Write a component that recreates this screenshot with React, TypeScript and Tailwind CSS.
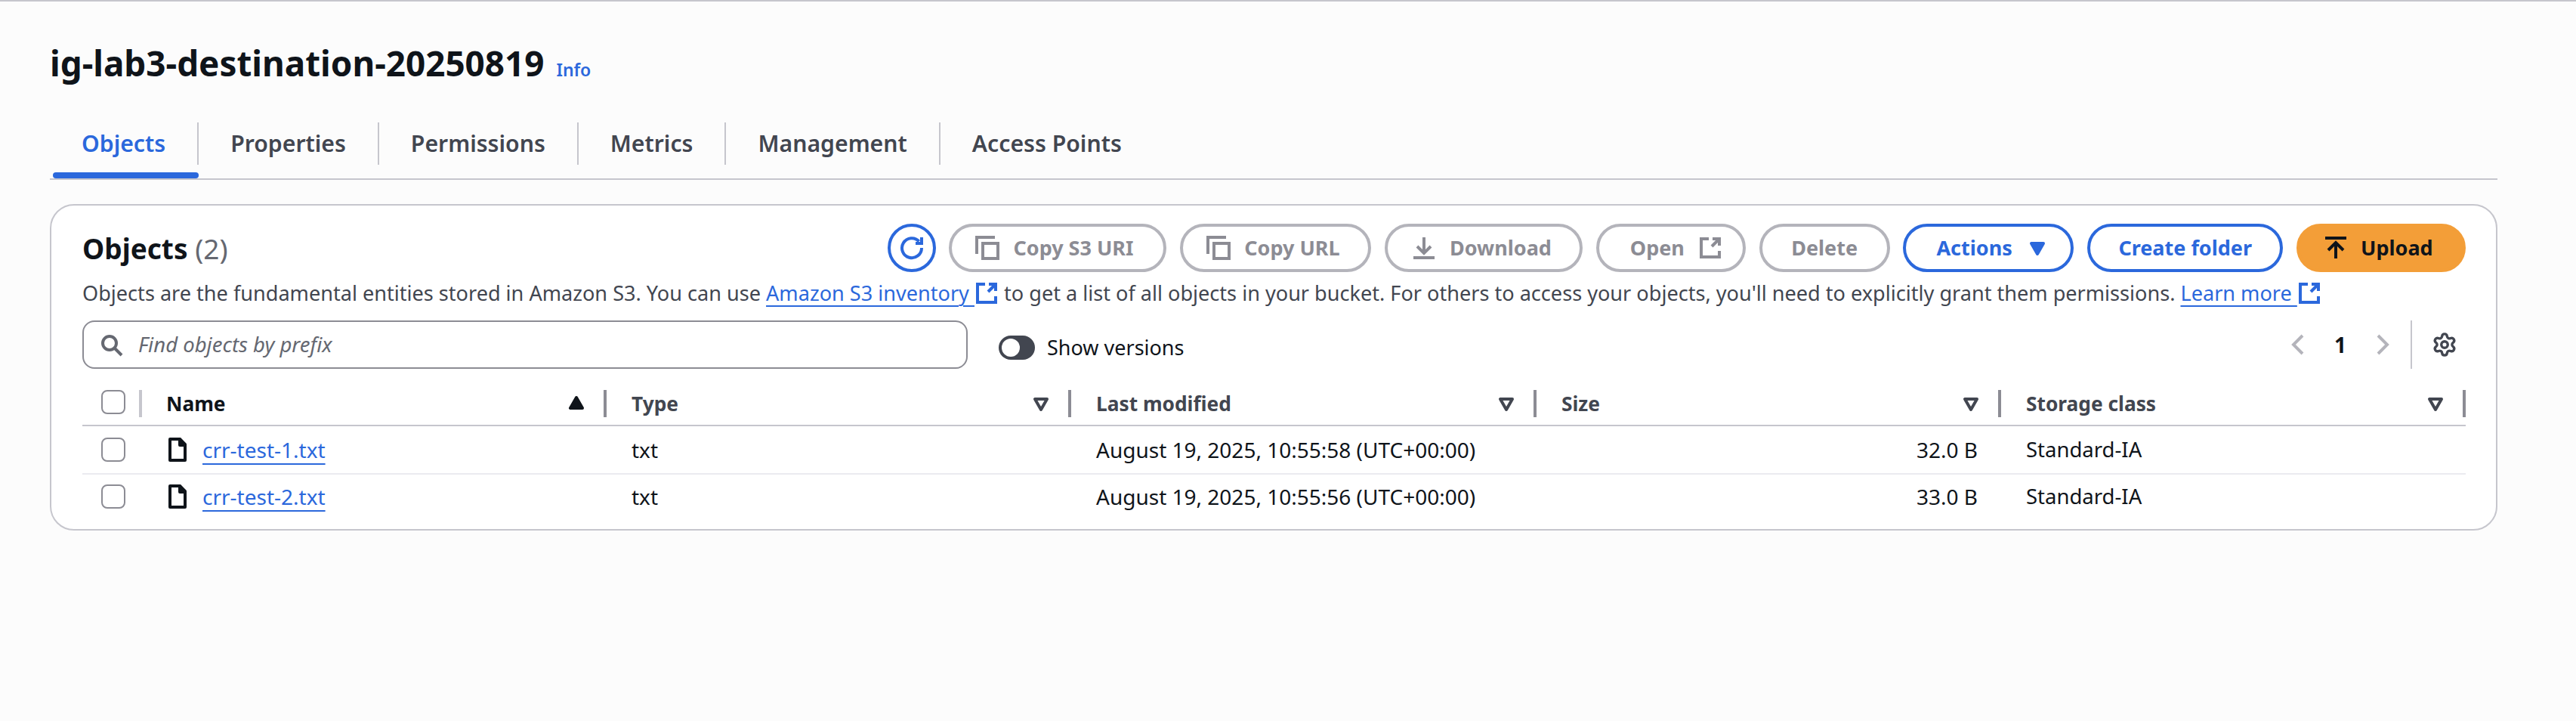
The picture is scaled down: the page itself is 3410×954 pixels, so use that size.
import React from 'react';
import { Settings } from 'lucide-react';

const font = { fontFamily: '"Noto Sans", sans-serif' };

function Ico({ children, className = '' }: { children: React.ReactNode; className?: string }) {
  return (
    <svg viewBox="0 0 16 16" fill="none" stroke="currentColor" strokeWidth="2" className={`w-8 h-8 shrink-0 ${className}`}>
      {children}
    </svg>
  );
}

function ExternalIcon({ className = '' }: { className?: string }) {
  return (
    <Ico className={className}>
      <path d="M7 2H2v12h12v-4" />
      <path d="M14 2 9 7" />
      <path d="M9.500 2H14v4.500" />
    </Ico>
  );
}

function CopyIcon() {
  return (
    <Ico>
      <path d="M1 12V1h12" />
      <path d="M5 5h10v10H5z" />
    </Ico>
  );
}

function Button({ children, disabled, primary, className = '' }: { children: React.ReactNode; disabled?: boolean; primary?: boolean; className?: string }) {
  const look = primary
    ? 'bg-[#f39e38] text-[#0f141a] border-[#f39e38]'
    : disabled
      ? 'border-[#b4b4bb] text-[#8c8c94] bg-white'
      : 'border-[#2b68dc] text-[#2b68dc] bg-white';
  return (
    <div className={`h-16 border-4 rounded-full flex items-center text-[27px] font-bold shrink-0 ${look} ${className}`}>
      {children}
    </div>
  );
}

function Checkbox() {
  return <div className="w-8 h-8 rounded-[8px] border-2 border-[#8c8c94] bg-white shrink-0" />;
}

function SortDown() {
  return (
    <svg viewBox="0 0 16 16" className="w-8 h-8 text-[#424650]" fill="none" stroke="currentColor" strokeWidth="2" strokeLinejoin="round">
      <path d="M4 5h8l-4 7z" />
    </svg>
  );
}

function Header({ label, sort, dark, className = 'pl-[33px]' }: { label: string; sort: React.ReactNode; dark?: boolean; className?: string }) {
  return (
    <div className={`flex items-center h-9 border-r-4 border-[#8c8c94] pr-[20px] justify-between ${className}`}>
      <span className={`text-[26.300px] font-bold leading-none ${dark ? 'text-[#0f141a]' : 'text-[#424650]'}`}>{label}</span>
      {sort}
    </div>
  );
}

const rows = [
  { name: 'crr-test-1.txt', modified: 'August 19, 2025, 10:55:58 (UTC+00:00)', size: '32.0 B' },
  { name: 'crr-test-2.txt', modified: 'August 19, 2025, 10:55:56 (UTC+00:00)', size: '33.0 B' },
];

const tabs = ['Objects', 'Properties', 'Permissions', 'Metrics', 'Management', 'Access Points'];

const cols = 'grid grid-cols-[79px_615px_615px_616px_615px_615px]';

export default function App() {
  return (
    <div style={font} className="w-[3410px] h-[954px] bg-[#fcfcfc] border-t-2 border-[#c6c6cd] text-[#0f141a] overflow-hidden">
      <div className="pl-[66px] w-[3306px]">
        <div className="flex items-baseline pt-[53px] h-[160px]">
          <h1 className="text-[45.800px] leading-[56px] font-bold">ig-lab3-destination-20250819</h1>
          <span className="ml-4 text-[23px] font-semibold text-[#2b68dc]">Info</span>
        </div>
        <div className="flex border-b-2 border-[#c6c6cd] h-[76px]">
          {tabs.map((t, i) => (
            <div key={t} className="relative h-[74px]">
              <div
                className={`h-14 flex items-center px-[42px] text-[30.200px] font-semibold ${i < tabs.length - 1 ? 'border-r-2 border-[#c6c6cd]' : ''} ${i === 0 ? 'text-[#2b68dc]' : 'text-[#424650]'}`}
              >
                {t}
              </div>
              {i === 0 && <div className="absolute left-1 right-0 bottom-0 h-2 rounded-[4px] bg-[#2b68dc]" />}
            </div>
          ))}
        </div>

        <div className="mt-8 h-[432px] border-2 border-[#c6c6cd] rounded-[32px] bg-white px-[41px] pt-6">
          <div className="flex items-center justify-between h-16 -mr-px">
            <h2 className="text-[37px] font-bold leading-none">
              Objects <span className="font-normal text-[#656871]">(2)</span>
            </h2>
            <div className="flex items-center gap-[17.800px]">
              <div className="w-16 h-16 rounded-full border-4 border-[#2b68dc] text-[#2b68dc] flex items-center justify-center">
                <Ico>
                  <path d="M12.800 3.700A6.500 6.500 0 1 0 14.500 8" />
                  <path d="M14.500 1v4h-4" />
                </Ico>
              </div>
              <Button disabled className="w-[288px] pl-[31px] gap-[18px]"><CopyIcon />Copy S3 URI</Button>
              <Button disabled className="w-[253px] pl-[31px] gap-[18px]"><CopyIcon />Copy URL</Button>
              <Button disabled className="w-[262px] pl-[32px] gap-[18px]">
                <Ico>
                  <path d="M8 1v10" />
                  <path d="m3.500 7 4.500 4.500L12.500 7" />
                  <path d="M1 14.500h14" />
                </Ico>
                Download
              </Button>
              <Button disabled className="w-[198px] pl-[41px] gap-[18px]">Open<ExternalIcon /></Button>
              <Button disabled className="w-[173px] justify-center">Delete</Button>
              <Button className="w-[226px] pl-[40px] gap-[17px]">
                Actions
                <svg viewBox="0 0 16 16" className="w-8 h-8" fill="currentColor" stroke="currentColor" strokeWidth="2" strokeLinejoin="round">
                  <path d="M4 5h8l-4 7z" />
                </svg>
              </Button>
              <Button className="w-[259px] justify-center">Create folder</Button>
              <Button primary className="w-[224px] pl-[32px] gap-[17px]">
                <Ico>
                  <path d="M1 1.500h14" />
                  <path d="M8 15V5" />
                  <path d="M3 9.500 8 4.500l5 5" />
                </Ico>
                Upload
              </Button>
            </div>
          </div>

          <p className="text-[27.100px] leading-10 mt-[8px] h-10 whitespace-nowrap text-[#424650] flex items-center">
            <span>Objects are the fundamental entities stored in Amazon S3. You can use&nbsp;</span>
            <a className="text-[#2b68dc] underline underline-offset-[6px] decoration-2">Amazon S3 inventory&nbsp;</a>
            <ExternalIcon className="text-[#2b68dc]" />
            <span>&nbsp;to get a list of all objects in your bucket. For others to access your objects, you'll need to explicitly grant them permissions.&nbsp;</span>
            <a className="text-[#2b68dc] underline underline-offset-[6px] decoration-2">Learn more&nbsp;</a>
            <ExternalIcon className="text-[#2b68dc]" />
          </p>

          <div className="flex items-center h-16 mt-4">
            <div className="w-[1172px] h-16 border-2 border-[#8c8c94] rounded-[16px] flex items-center pl-[21px] gap-[19px]">
              <Ico className="text-[#656871]">
                <circle cx="6.500" cy="7" r="4.500" />
                <path d="m10 10.500 4.500 4.500" />
              </Ico>
              <span className="text-[27.500px] italic text-[#656871]">Find objects by prefix</span>
            </div>
            <div className="ml-[41px] mt-2 w-12 h-8 rounded-full bg-[#424650] p-1 shrink-0">
              <div className="w-6 h-6 rounded-full bg-white" />
            </div>
            <span className="ml-4 mt-2 text-[27px]">Show versions</span>
            <div className="ml-auto flex items-center h-16">
              <svg viewBox="0 0 16 16" className="w-8 h-8 text-[#b4b4bb]" fill="none" stroke="currentColor" strokeWidth="2">
                <path d="M11 2 5 8l6 6" />
              </svg>
              <span className="w-[80px] text-center text-[28px] font-bold">1</span>
              <svg viewBox="0 0 16 16" className="w-8 h-8 text-[#b4b4bb]" fill="none" stroke="currentColor" strokeWidth="2">
                <path d="m5 2 6 6-6 6" />
              </svg>
              <div className="ml-[21px] h-16 border-l-2 border-[#c6c6cd]" />
              <div className="w-[70px] pl-[26px] text-[#424650]">
                <Settings size={34} strokeWidth={2.4} />
              </div>
            </div>
          </div>

          <div className={`${cols} mt-[28px] h-[48px] items-start border-b-2 border-[#c6c6cd] w-[3155px]`}>
            <div className="flex items-start h-9 pl-[25px] border-r-4 border-[#c6c6cd] w-[79px]">
              <Checkbox />
            </div>
            <Header
              dark
              label="Name"
              className="pl-[32px]"
              sort={
                <svg viewBox="0 0 16 16" className="w-8 h-8 text-[#0f141a]" fill="currentColor" stroke="currentColor" strokeWidth="2" strokeLinejoin="round">
                  <path d="M4 11h8L8 4z" />
                </svg>
              }
            />
            <Header label="Type" sort={<SortDown />} />
            <Header label="Last modified" sort={<SortDown />} />
            <Header label="Size" sort={<SortDown />} />
            <Header label="Storage class" sort={<SortDown />} />
          </div>

          {rows.map((r, i) => (
            <div key={r.name} className={`${cols} items-center w-[3155px] text-[28px] ${i === 0 ? 'h-16 border-b-2 border-[#ebebf0]' : 'h-[58px]'}`}>
              <div className="pl-[25px]">
                <Checkbox />
              </div>
              <div className="pl-[32px] flex items-center gap-4">
                <Ico>
                  <path d="M2.500 1H9l3.500 3.500V15h-10z" strokeLinejoin="round" />
                  <path d="M9 1v4h3.500z" fill="currentColor" strokeLinejoin="round" />
                </Ico>
                <a className="text-[#2b68dc] underline underline-offset-[7px] decoration-2">{r.name}</a>
              </div>
              <div className="pl-[33px]">txt</div>
              <div className="pl-[33px]">{r.modified}</div>
              <div className="pr-[31px] text-right">{r.size}</div>
              <div className="pl-[33px] text-[27.500px]">Standard-IA</div>
            </div>
          ))}
        </div>
      </div>
    </div>
  );
}
